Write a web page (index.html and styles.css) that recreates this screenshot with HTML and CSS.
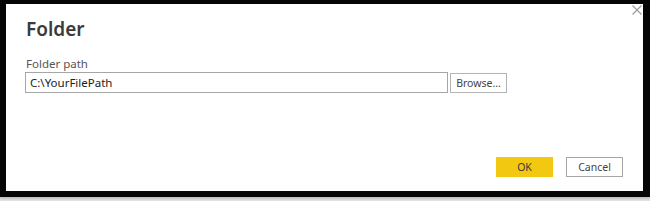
FILE: index.html
```html
<!DOCTYPE html>
<html>
<head>
<meta charset="utf-8">
<link rel="stylesheet" href="styles.css">
</head>
<body>
<div class="frame">
  <div class="dialog">
    <span class="close" aria-label="Close">
      <svg width="10" height="10" viewBox="0 0 10 10"><path d="M0.5 0.5 L9.5 9.5 M9.5 0.5 L0.5 9.5" stroke="#9a9a9a" stroke-width="1.1" fill="none"/></svg>
    </span>
    <h1 class="title">Folder</h1>
    <label class="label">Folder path</label>
    <div class="row">
      <div class="input">C:\YourFilePath</div>
      <div class="btn browse">Browse...</div>
    </div>
    <div class="spacer"></div>
    <div class="actions">
      <div class="btn ok">OK</div>
      <div class="btn cancel">Cancel</div>
    </div>
  </div>
</div>
</body>
</html>
```
FILE: styles.css
```css
html, body {
  margin: 0;
  padding: 0;
}
body {
  width: 650px;
  height: 201px;
  background: #e4e4e4;
  font-family: "Noto Sans", "Open Sans", sans-serif;
  overflow: hidden;
}
.frame {
  box-sizing: border-box;
  width: 650px;
  height: 197px;
  border-style: solid;
  border-color: #050505;
  border-width: 4px 7px 6px 6px;
  background: #fff;
  box-shadow: 0 2px 2px #bdbdbd;
}
.dialog {
  position: relative;
  box-sizing: border-box;
  height: 100%;
  display: flex;
  flex-direction: column;
  padding: 13px 20px 12px 20px;
}
.close {
  position: absolute;
  top: 1px;
  right: 1px;
  width: 10px;
  height: 10px;
  display: block;
  line-height: 0;
}
.title {
  margin: 0;
  font-size: 19px;
  line-height: 24px;
  font-weight: 600;
  color: #3a3a3a;
}
.label {
  margin-top: 16px;
  font-size: 11.5px;
  line-height: 14px;
  color: #555;
}
.row {
  display: flex;
  align-items: flex-start;
  gap: 2px;
  margin-top: 1px;
  margin-left: -1px;
}
.input {
  box-sizing: border-box;
  width: 423px;
  height: 21px;
  border: 1px solid #a6a6a6;
  padding: 0 4px;
  font-size: 11.5px;
  line-height: 19px;
  color: #222;
}
.btn {
  box-sizing: border-box;
  width: 57px;
  height: 20px;
  font-size: 10.5px;
  line-height: 18px;
  text-align: center;
  color: #444;
  border: 1px solid #b4b4b4;
  background: #fff;
}
.browse {
  margin-top: 1px;
}
.spacer {
  flex: 1;
}
.actions {
  display: flex;
  justify-content: flex-end;
  gap: 13px;
  margin-bottom: 2px;
}
.ok {
  background: #f2c811;
  border-color: #f2c811;
  color: #3a3a3a;
}
.cancel {
  border-color: #a6a6a6;
}
```
